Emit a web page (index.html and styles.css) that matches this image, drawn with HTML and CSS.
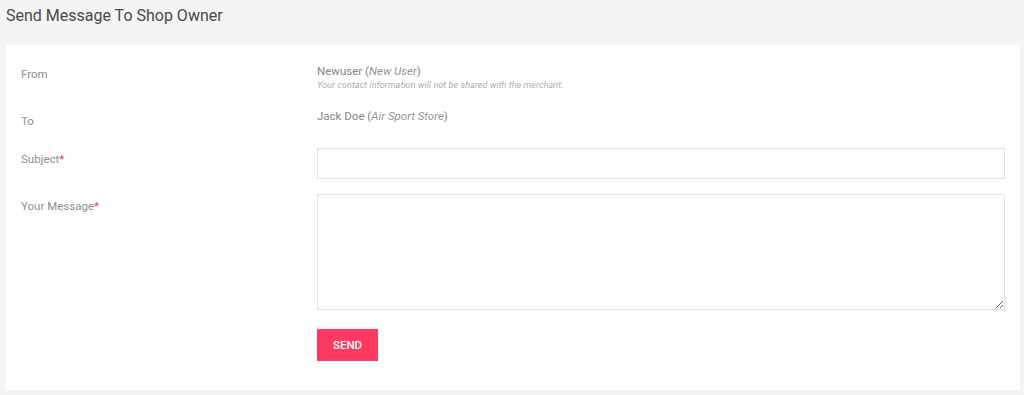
FILE: index.html
```html
<!DOCTYPE html>
<html lang="en">
<head>
<meta charset="utf-8">
<title>Send Message To Shop Owner</title>
<link rel="stylesheet" href="styles.css">
</head>
<body>
<h2 class="page-title">Send Message To Shop Owner</h2>
<form class="card">
  <div class="row row-from">
    <div class="label">From</div>
    <div class="field">
      <div class="value">Newuser (<em>New User</em>)</div>
      <div class="note">Your contact information will not be shared with the merchant.</div>
    </div>
  </div>
  <div class="row row-to">
    <div class="label">To</div>
    <div class="field">
      <div class="value">Jack Doe (<em>Air Sport Store</em>)</div>
    </div>
  </div>
  <div class="row row-subject">
    <label class="label label-input" for="subject">Subject<span class="req">*</span></label>
    <div class="field">
      <input id="subject" class="input" type="text">
    </div>
  </div>
  <div class="row row-message">
    <label class="label label-input" for="message">Your Message<span class="req">*</span></label>
    <div class="field">
      <textarea id="message" class="textarea"></textarea>
    </div>
  </div>
  <div class="row row-actions">
    <div class="label"></div>
    <div class="field">
      <button type="button" class="btn-send">SEND</button>
    </div>
  </div>
</form>
</body>
</html>
```
FILE: styles.css
```css
html, body {
  margin: 0;
  padding: 0;
}
body {
  background: #f4f4f4;
  font-family: Roboto, "Liberation Sans", Arial, sans-serif;
  font-size: 11.5px;
  line-height: 18px;
  color: #808080;
  height: 395px;
  overflow: hidden;
}
.page-title {
  margin: 0;
  padding: 6px 6px 0;
  font-size: 16px;
  line-height: 20px;
  font-weight: 400;
  color: #484848;
}
.card {
  display: block;
  margin: 19px 4px 0 6px;
  background: #fff;
  padding: 17px 15px 29px 15px;
}
.row {
  display: flex;
  align-items: flex-start;
}
.label {
  width: 296px;
  flex: none;
  padding-top: 3px;
  color: #8e8e8e;
  font-size: 11.5px;
  line-height: 18px;
}
.label-input {
  padding-top: 2px;
}
.row-message .label-input {
  padding-top: 3px;
}
.field {
  flex: 1;
  min-width: 0;
}
.value {
  color: #858585;
  font-size: 11.5px;
  line-height: 18px;
}
.value em {
  font-style: italic;
  color: #939393;
}
.note {
  font-size: 9px;
  line-height: 11px;
  letter-spacing: 0.08px;
  font-style: italic;
  color: #ababab;
}
.row-to {
  margin-top: 16px;
}
.row-to .label {
  padding-top: 5px;
}
.row-subject {
  margin-top: 18px;
}
.row-message {
  margin-top: 15px;
}
.row-actions {
  margin-top: 19px;
}
.input {
  display: block;
  box-sizing: border-box;
  width: 100%;
  height: 31px;
  margin: 0;
  border: 1px solid #e1e1e1;
  background: #fff;
  padding: 0 8px;
  font: inherit;
  outline: none;
}
.textarea {
  display: block;
  box-sizing: border-box;
  width: 100%;
  height: 116px;
  margin: 0;
  border: 1px solid #e1e1e1;
  background: #fff;
  padding: 6px 8px;
  font: inherit;
  resize: vertical;
  outline: none;
}
.req {
  color: #e8333c;
}
.btn-send {
  display: block;
  width: 61px;
  height: 32px;
  margin: 0;
  padding: 0;
  border: 0;
  background: #ff3a60;
  color: #fff;
  font-family: Roboto, "Liberation Sans", Arial, sans-serif;
  font-size: 11.5px;
  font-weight: 500;
  cursor: pointer;
}
```
